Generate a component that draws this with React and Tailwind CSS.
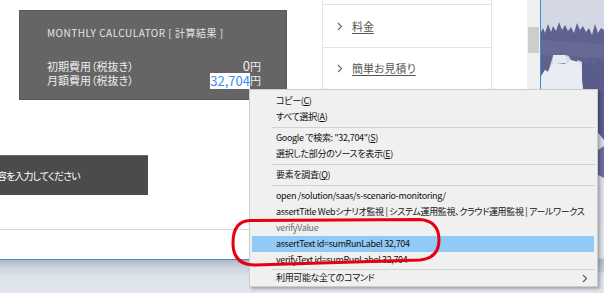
import React from "react";

function Chevron({ className }) {
  return (
    <svg width="6" height="9" viewBox="0 0 6 9" className={className}>
      <polyline points="1,1 4.5,4.5 1,8" fill="none" stroke="currentColor" strokeWidth="1.1" />
    </svg>
  );
}

function Wallpaper() {
  return (
    <svg width="604" height="293" viewBox="0 0 604 293" className="absolute inset-0">
      <defs>
        <linearGradient id="sky" x1="0" y1="0" x2="0" y2="1">
          <stop offset="0" stopColor="#d3d7e4" />
          <stop offset="1" stopColor="#dfe2ec" />
        </linearGradient>
        <linearGradient id="snow" x1="0" y1="0" x2="0" y2="1">
          <stop offset="0" stopColor="#a9b2c0" />
          <stop offset="0.25" stopColor="#ccd3dd" />
          <stop offset="0.5" stopColor="#dce2ea" />
          <stop offset="1" stopColor="#e2e7ed" />
        </linearGradient>
      </defs>
      <rect x="0" y="0" width="604" height="293" fill="#dfe4eb" />
      <rect x="540" y="0" width="64" height="260" fill="url(#sky)" />
      <polygon
        fill="#5f6190"
        points="540,34 543,28 545,33 548,24 551,32 553,26 556,31 559,22 562,30 565,25 568,31 571,27 574,33 577,23 580,30 583,26 586,32 589,28 592,35 595,24 598,33 601,28 604,30 604,120 598,118 596,100 592,96 590,75 586,70 582,62 578,60 575,64 571,60 568,55 566,56 565,64 555,63 553,56 550,66 548,72 545,70 540,78"
      />
      <polygon fill="#7a7ca4" points="540,40 604,44 604,58 540,55" opacity="0.35" />
      <rect x="553" y="55" width="13" height="8" fill="#e6e9f1" />
      <polygon fill="#e9ecf3" points="540,78 545,70 548,72 553,63 566,64 571,60 578,62 582,66 582,90 540,90" />
      <polygon fill="#5a5c8c" points="582,60 586,64 590,58 594,66 598,60 604,62 604,140 596,130 590,110 584,95 582,80" />
      <polygon fill="#6b6d98" points="598,150 604,146 604,178 598,175" />
      <rect x="0" y="259" width="604" height="34" fill="url(#snow)" />
      <polygon fill="#b9c1cd" points="300,262 604,258 604,272 450,268" opacity="0.6" />
    </svg>
  );
}

function MenuItem({ children, gray, highlight, arrow }) {
  return (
    <div
      className={
        "flex items-center h-[16px] ml-[2px] mr-[3px] pl-[24px] pr-[6px] whitespace-nowrap " +
        (highlight ? "bg-[#91c9f7] " : "") +
        (gray ? "text-[#6d6d6d]" : "text-[#111111]")
      }
    >
      <span className="flex-1">{children}</span>
      {arrow && <Chevron className="text-[#555555]" />}
    </div>
  );
}

function Sep({ h }) {
  return (
    <div className={"flex items-center ml-[22px] mr-[2px] " + h}>
      <div className="w-full h-px bg-[#d2d2d2]" />
    </div>
  );
}

export default function App() {
  return (
    <div className="relative w-[604px] h-[293px] overflow-hidden bg-[#dfe4eb] font-['Noto_Sans_CJK_JP','Noto_Sans',sans-serif] [font-feature-settings:'palt']">
      <Wallpaper />

      {/* browser window */}
      <div className="relative flex w-[541px] h-[260px] bg-white border-r border-b border-[#3f8bd2]">
        <div className="flex flex-col w-[527px] overflow-hidden">
          <div className="flex h-[155px] shrink-0">
            <div className="w-[322px] shrink-0">
              <div className="ml-[19px] mt-[10px] w-[268px] h-[90px] bg-[#656565] border border-[#5a5a5a] pl-[27px] pr-[25px] pt-[15px]">
                <div className="text-[10px] leading-[14px] tracking-[0.05em] text-[#e4e4e4] whitespace-nowrap">
                  MONTHLY CALCULATOR [ 計算結果 ]
                </div>
                <div className="mt-[19px] flex items-center justify-between h-[14px] text-[#eeeeee]">
                  <span className="text-[11px] leading-[14px]">初期費用（税抜き）</span>
                  <span className="flex items-center">
                    <span className="text-[13px] leading-[14px]">0</span>
                    <span className="text-[11px] leading-[14px]">円</span>
                  </span>
                </div>
                <div className="flex items-center justify-between h-[14px] text-[#eeeeee]">
                  <span className="text-[11px] leading-[14px]">月額費用（税抜き）</span>
                  <span className="flex items-center">
                    <span className="text-[13px] leading-[16px] h-[16px] bg-white text-[#3d8cf2] mt-[2px]">32,704</span>
                    <span className="text-[11px] leading-[14px]">円</span>
                  </span>
                </div>
              </div>
            </div>
            <div className="w-[170px] shrink-0 border-x border-[#e4e4e4] text-[11px] text-[#555555]">
              <div className="h-[5px] border-b border-[#e4e4e4]" />
              <div className="h-[43px] border-b border-[#e4e4e4] flex items-center pl-[14px] gap-[9px]">
                <Chevron className="text-[#666666]" />
                <span className="underline underline-offset-2">料金</span>
              </div>
              <div className="h-[42px] border-b border-[#e4e4e4] flex items-center pl-[14px] gap-[9px]">
                <Chevron className="text-[#666666]" />
                <span className="underline underline-offset-2">簡単お見積り</span>
              </div>
            </div>
          </div>
          <div className="h-[40px] w-[148px] shrink-0 bg-[#4b4b4b] border-t border-[#6e6e6e] overflow-hidden flex items-center">
            <span className="ml-[-3px] text-[10px] tracking-[-0.9px] text-white whitespace-nowrap">容を入力してください</span>
          </div>
          <div className="h-[34px] shrink-0" />
          <div className="flex-1 border-t border-[#d6d6d6]" />
        </div>
        <div className="w-[13px] bg-[#f0f0f0] shrink-0">
          <div className="mt-[27px] ml-[1px] w-[11px] h-[26px] bg-[#cdcdcd]" />
        </div>
      </div>

      {/* context menu */}
      <div className="absolute left-[249px] top-[89px] w-[349px] h-[198px] bg-[#f0f0f0] border border-[#cccccc] shadow-[2px_2px_3px_rgba(0,0,0,0.28)] pt-[3px] text-[9px] tracking-[-0.35px] leading-[16px]">
        <MenuItem>コピー(<span className="underline">C</span>)</MenuItem>
        <MenuItem>すべて選択(<span className="underline">A</span>)</MenuItem>
        <Sep h="h-[5px]" />
        <MenuItem>Google で検索: "32,704"(<span className="underline">S</span>)</MenuItem>
        <MenuItem>選択した部分のソースを表示(<span className="underline">E</span>)</MenuItem>
        <Sep h="h-[5px]" />
        <MenuItem>要素を調査(<span className="underline">Q</span>)</MenuItem>
        <Sep h="h-[5px]" />
        <MenuItem>open /solution/saas/s-scenario-monitoring/</MenuItem>
        <MenuItem>assertTitle Webシナリオ監視 | システム運用監視、クラウド運用監視 | アールワークス</MenuItem>
        <MenuItem gray>verifyValue</MenuItem>
        <MenuItem highlight>assertText id=sumRunLabel 32,704</MenuItem>
        <MenuItem>verifyText id=sumRunLabel 32,704</MenuItem>
        <Sep h="h-[2px]" />
        <MenuItem arrow>利用可能な全てのコマンド</MenuItem>
      </div>

      {/* red annotation */}
      <svg width="604" height="293" viewBox="0 0 604 293" className="absolute inset-0 pointer-events-none">
        <path
          d="M 250 220.5 L 420 219.5 Q 439 221 439 240 Q 439 258 420 260 L 255 265 Q 233 265 233 243 Q 233 221 250 220.5 Z"
          fill="none"
          stroke="#e60012"
          strokeWidth="3"
        />
      </svg>
    </div>
  );
}
